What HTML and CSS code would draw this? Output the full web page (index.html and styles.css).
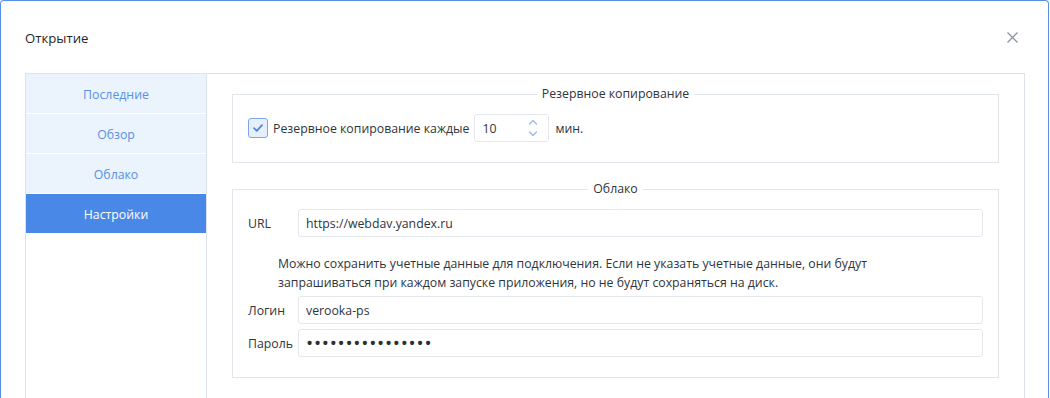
FILE: index.html
```html
<!DOCTYPE html>
<html lang="ru">
<head>
<meta charset="utf-8">
<title>Открытие</title>
<link rel="stylesheet" href="styles.css">
</head>
<body>
<div class="dialog">
  <div class="header">
    <div class="title">Открытие</div>
    <svg class="close" width="11" height="11" viewBox="0 0 11 11"><path d="M0.5 0.5L10.5 10.5M10.5 0.5L0.5 10.5" stroke="#8693a2" stroke-width="1.3" fill="none"/></svg>
  </div>
  <div class="panel">
    <div class="sidebar">
      <div class="tab">Последние</div>
      <div class="tab">Обзор</div>
      <div class="tab">Облако</div>
      <div class="tab active">Настройки</div>
    </div>
    <div class="content">
      <fieldset class="group">
        <legend>Резервное копирование</legend>
        <div class="backup-row">
          <span class="checkbox"><svg width="10" height="8" viewBox="0 0 10 8"><path d="M1 4.2L3.8 6.8L9 1.2" stroke="#4a88e8" stroke-width="1.8" fill="none" stroke-linecap="round" stroke-linejoin="round"/></svg></span>
          <span class="text">Резервное копирование каждые</span>
          <div class="num">
            <span class="num-val">10</span>
            <svg class="spin" width="10" height="18" viewBox="0 0 10 18"><path d="M1.5 5L5 1.5L8.5 5M1.5 13L5 16.5L8.5 13" stroke="#9dbbe4" stroke-width="1.4" fill="none" stroke-linecap="round" stroke-linejoin="round"/></svg>
          </div>
          <span class="text">мин.</span>
        </div>
      </fieldset>
      <fieldset class="group cloud">
        <legend>Облако</legend>
        <div class="row">
          <label class="lbl">URL</label>
          <input class="field" type="text" value="https://webdav.yandex.ru">
        </div>
        <p class="hint">Можно сохранить учетные данные для подключения. Если не указать учетные данные, они будут запрашиваться при каждом запуске приложения, но не будут сохраняться на диск.</p>
        <div class="row">
          <label class="lbl">Логин</label>
          <input class="field" type="text" value="verooka-ps">
        </div>
        <div class="row row-pass">
          <label class="lbl">Пароль</label>
          <input class="field pass" type="password" value="abcdefghijklmnop">
        </div>
      </fieldset>
    </div>
  </div>
</div>
</body>
</html>
```

FILE: styles.css
```css
* { box-sizing: border-box; }
html, body { margin: 0; padding: 0; background: #fff; overflow: hidden; }
body {
  font-family: "Open Sans", "Noto Sans", sans-serif;
  font-size: 12.3px;
  color: #2f353c;
}
.dialog {
  width: 1049px;
  height: 398px;
  border: 1px solid #5590e8;
  border-bottom: none;
  border-radius: 4px 4px 0 0;
  background: #fff;
  overflow: hidden;
}
.header {
  height: 72px;
  display: flex;
  align-items: center;
  justify-content: space-between;
  padding: 2px 30px 0 24px;
}
.title { font-size: 13.2px; color: #1f2329; }
.close { margin-top: -2px; }
.panel {
  margin-left: 24px;
  width: 1000px;
  height: 400px;
  border: 1px solid #dde3ea;
  display: flex;
}
.sidebar {
  width: 181px;
  border-right: 1px solid #dde3ea;
  display: flex;
  flex-direction: column;
}
.tab {
  height: 40px;
  display: flex;
  align-items: center;
  justify-content: center;
  background: #ebf3fc;
  color: #5a8fe4;
  border-bottom: 1px solid #fff;
  padding-top: 1px;
}
.tab.active { background: #4a88e8; color: #fff; border-bottom: none; height: 39px; }
.content {
  flex: 1;
  padding: 11px 25px 0 25px;
  display: flex;
  flex-direction: column;
  gap: 17px;
}
.group {
  margin: 0;
  border: 1px solid #e1e6ec;
  padding: 11px 15px 20px 15px;
}
.group legend {
  margin: 0 auto;
  padding: 0 5px;
  color: #2f353c;
  line-height: 18px;
}
.backup-row {
  display: flex;
  align-items: center;
  height: 28px;
}
.checkbox {
  width: 20px;
  height: 20px;
  border: 1px solid #7aa7e8;
  border-radius: 3px;
  background: #e6effb;
  display: flex;
  align-items: center;
  justify-content: center;
  margin-right: 5px;
}
.text { margin-right: 5px; }
.num {
  width: 75px;
  height: 28px;
  border: 1px solid #e3e7ed;
  border-radius: 3px;
  display: flex;
  align-items: center;
  justify-content: space-between;
  padding: 0 10px 0 7px;
  margin-right: 6px;
}
.row {
  display: flex;
  align-items: center;
  height: 28px;
}
.lbl { width: 50px; }
.field {
  flex: 1;
  height: 28px;
  border: 1px solid #e3e7ed;
  border-radius: 3px;
  padding: 0 7px;
  font: inherit;
  color: #2f353c;
  outline: none;
}
.pass { font-size: 19px; letter-spacing: 0.75px; color: #2a2f35; }
.hint {
  margin: 17px 0 4px 30px;
  line-height: 19px;
  width: 600px;
}
.row-pass { margin-top: 5px; }
```
